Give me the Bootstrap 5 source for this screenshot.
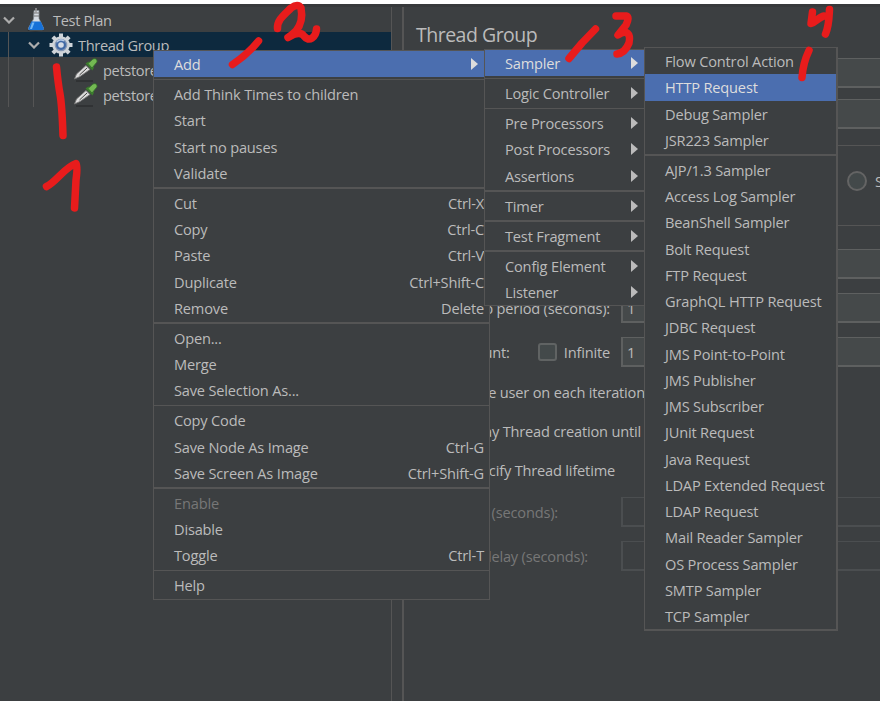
<!DOCTYPE html>
<html lang="en">
<head>
<meta charset="utf-8">
<meta name="viewport" content="width=device-width, initial-scale=1">
<title>Test Plan</title>
<link href="https://cdn.jsdelivr.net/npm/bootstrap@5.3.0/dist/css/bootstrap.min.css" rel="stylesheet">
<style>
body{width:880px;height:701px;background:#3c3f41;color:#bbb;font-family:"Open Sans","Noto Sans",sans-serif;font-size:14.6px;line-height:26.25px;letter-spacing:-.18px;white-space:nowrap}
.app{height:701px;border-top:4px solid #fff;overflow:hidden}
.edge{height:3px;background:#37393b}
.tree-pane{width:392px;border-right:1px solid #555;letter-spacing:-.35px}
.splitter{width:12px;border-right:2px solid #555}
.tree-row{height:25px;line-height:26px}
.tree-row.picked{background:#0d293e}
.guide{width:1px;background:#555;height:25px;margin-left:8px}
.guide + .guide{margin-left:24px}
.chev-top{width:12px;height:8px;margin-left:3px;margin-right:11px}
.chev-sub{width:12px;height:8px;margin-left:19px;margin-right:9px}
.plan-name{padding-left:7px}
.group-name{padding-left:5px}
.sample-icon{margin-left:40px;margin-right:5px}
.form-pane{width:476px;padding-left:12px;overflow:hidden}
.pane-title{font-size:19.5px;line-height:30px;height:51px;padding-top:13px;letter-spacing:-.5px}
.field-box{height:30px;line-height:28px;background:#45494a;border:2px solid #5e6060;border-top-width:1px;border-right:0;padding-left:4px}
.field-box.second{margin-top:11px}
.field-box.off{background:transparent;border-color:#4b4e50}
.field-row{height:30px;line-height:30px;margin-bottom:14px}
.field-row.last-on{margin-bottom:6px}
.field-name{width:206px;margin-right:-1px;flex:none}
.off-text{color:#777}
.opt-row{height:39px;line-height:39px}
.opt-a{width:229px}.opt-b{width:225px}.opt-c{width:199px}
.opt-gap{height:7px}
.off-a{width:142px}.off-b{width:172px}
.box-check{width:19px;height:18px;border:2px solid #606363;background:#43494a;border-radius:3px;margin-left:28px;margin-right:7px}
.box-radio{width:20px;height:20px;border:2px solid #646464;background:#43494a;border-radius:50%}
.group-one{margin-top:16px;height:80px;border-top:1px solid #555;padding-left:431px;padding-bottom:9px}
.group-two{border-top:1px solid #555;padding-top:23px}
.popup{position:absolute;background:#3c3f41;border:1px solid #555;overflow:hidden}
.popup-main{left:153px;top:50px;width:337px;height:550px}
.popup-add{left:484px;top:49px;width:162px;height:257px}
.popup-sampler{left:644px;top:47px;width:194px;height:584px;border-right-width:2px;border-bottom-width:2px}
.popup-item{height:26.25px;padding:0 5px 0 20px}
.popup-add .popup-item{padding-right:7px}
.popup-item.hot{background:#4b6eaf;color:#ddd}
.popup-rule{height:3.75px;padding-top:1.5px}
.popup-rule::before{content:"";display:block;height:1.25px;background:#555}
.popup-rule.thick{padding-top:.75px}
.popup-rule.thick::before{height:2px}
.arrow{width:7px;height:12px;border-left:7px solid #bbb;border-top:6px solid transparent;border-bottom:6px solid transparent}
.hot .arrow{border-left-color:#ddd}
.popup-main .arrow{margin-right:6px}
.ink{position:absolute;left:0;top:0;pointer-events:none}
</style>
<script src="https://cdn.jsdelivr.net/npm/bootstrap@5.3.0/dist/js/bootstrap.bundle.min.js"></script>
</head>
<body class="overflow-hidden position-relative">
<svg class="d-none">
  <symbol id="chev" viewBox="0 0 12 8"><path d="M1 1.500 6 6.500l5-5" fill="none" stroke="#adadad" stroke-width="2.200"/></symbol>
  <symbol id="dropper" viewBox="0 0 24 24">
    <path d="M2 23h17" stroke="#2c2f31" stroke-width="1.500"/>
    <path d="M.5 21 2.500 16 12 7.500l4 4L6 18.500z" fill="#dcdcdc" stroke="#777" stroke-width=".9"/>
    <path d="M5.500 17 13 10" stroke="#444" stroke-width="1"/>
    <path d="M11.500 5.500l7 7 1.500-3L14.500 3.500z" fill="#3b7d2c"/>
    <path d="M14 5.500 19 1q4.500-1.500 4 3L18 10z" fill="#74b953" stroke="#34702b" stroke-width=".8"/>
  </symbol>
</svg>
<div class="app">
  <div class="edge"></div>
  <div class="d-flex h-100">
    <nav class="tree-pane flex-shrink-0">
      <div class="tree-row d-flex align-items-center">
        <svg class="flex-shrink-0 chev-top"><use href="#chev"/></svg>
        <svg class="flex-shrink-0" width="20" height="24" viewBox="0 0 20 24">
          <ellipse cx="9.500" cy="22" rx="8" ry="1.500" fill="#292b2c"/>
          <path d="M8 2.500h5v8l4.500 9.500q.5 2-1.500 2H4q-2 0-1.500-2L7.500 11z" fill="#d4dbe2" stroke="#83898f" stroke-width=".7"/>
          <path d="M5.300 13.500h9.500l3 7q.2 1.500-1.500 1.500H4q-2 0-1.500-1.500z" fill="#1671d8"/>
          <path d="M6 14.500h2.500L6 21H4z" fill="#70b6f5"/><path d="M7.500 5h6M8 8h5" stroke="#777" stroke-width="1"/><path d="M10 0v5" stroke="#999" stroke-width="1.500"/>
        </svg>
        <span class="plan-name">Test Plan</span>
      </div>
      <div class="tree-row picked d-flex align-items-center">
        <span class="guide"></span>
        <svg class="flex-shrink-0 chev-sub"><use href="#chev"/></svg>
        <svg class="flex-shrink-0" width="24" height="24" viewBox="-12 -12 24 24">
          <g fill="#cfd4d9"><path id="tooth" d="M-2-11.500h4v23h-4z"/><use href="#tooth" transform="rotate(45)"/><use href="#tooth" transform="rotate(90)"/><use href="#tooth" transform="rotate(135)"/><circle r="8.800"/></g>
          <circle r="6.300" fill="#8397b5"/><circle r="5" fill="#4169a5"/><circle r="2.800" fill="#d4dbe5"/><path d="M-4-3A5 5 0 0 1 3-4" fill="none" stroke="#b5c9e5" stroke-width="1.500"/>
        </svg>
        <span class="group-name">Thread Group</span>
      </div>
      <div class="tree-row d-flex align-items-center"><span class="guide"></span><span class="guide"></span><svg class="sample-icon flex-shrink-0" width="24" height="24"><use href="#dropper"/></svg><span>petstore</span></div>
      <div class="tree-row d-flex align-items-center"><span class="guide"></span><span class="guide"></span><svg class="sample-icon flex-shrink-0" width="24" height="24"><use href="#dropper"/></svg><span>petstore</span></div>
    </nav>
    <div class="splitter flex-shrink-0"></div>
    <main class="form-pane flex-shrink-0">
      <h1 class="pane-title fw-normal mb-0">Thread Group</h1>
      <div class="field-box"></div>
      <div class="field-box second"></div>
      <div class="group-one d-flex align-items-center"><span class="box-radio flex-shrink-0"></span><span class="ms-1 ps-1">S</span></div>
      <section class="group-two">
        <div class="field-row d-flex"><div class="field-name"></div><div class="field-box flex-grow-1"></div></div>
        <div class="field-row d-flex"><div class="field-name text-end pe-2"><span class="me-1">Ramp-up period (seconds):</span></div><div class="field-box flex-grow-1">1</div></div>
        <div class="field-row last-on d-flex"><div class="field-name d-flex align-items-center justify-content-end pe-2"><span>Loop Count:</span><span class="box-check flex-shrink-0"></span><span class="me-1">Infinite</span></div><div class="field-box flex-grow-1">1</div></div>
        <div class="opt-row"><div class="opt-a text-end">Same user on each iteration</div></div>
        <div class="opt-row"><div class="opt-b text-end">Delay Thread creation until</div></div>
        <div class="opt-row"><div class="opt-c text-end">Specify Thread lifetime</div></div>
        <div class="opt-gap"></div>
        <div class="field-row d-flex off-text"><div class="field-name"><div class="off-a text-end">Duration (seconds):</div></div><div class="field-box off flex-grow-1"></div></div>
        <div class="field-row d-flex off-text"><div class="field-name"><div class="off-b text-end">Startup delay (seconds):</div></div><div class="field-box off flex-grow-1"></div></div>
      </section>
    </main>
  </div>
</div>

<div class="popup popup-main">
  <div class="popup-item hot d-flex justify-content-between align-items-center"><span>Add</span><i class="arrow"></i></div>
  <div class="popup-rule"></div>
  <div class="popup-item">Add Think Times to children</div>
  <div class="popup-item">Start</div>
  <div class="popup-item">Start no pauses</div>
  <div class="popup-item">Validate</div>
  <div class="popup-rule thick"></div>
  <div class="popup-item d-flex justify-content-between"><span>Cut</span><span>Ctrl-X</span></div>
  <div class="popup-item d-flex justify-content-between"><span>Copy</span><span>Ctrl-C</span></div>
  <div class="popup-item d-flex justify-content-between"><span>Paste</span><span>Ctrl-V</span></div>
  <div class="popup-item d-flex justify-content-between"><span>Duplicate</span><span>Ctrl+Shift-C</span></div>
  <div class="popup-item d-flex justify-content-between"><span>Remove</span><span>Delete</span></div>
  <div class="popup-rule thick"></div>
  <div class="popup-item">Open...</div>
  <div class="popup-item">Merge</div>
  <div class="popup-item">Save Selection As...</div>
  <div class="popup-rule"></div>
  <div class="popup-item">Copy Code</div>
  <div class="popup-item d-flex justify-content-between"><span>Save Node As Image</span><span>Ctrl-G</span></div>
  <div class="popup-item d-flex justify-content-between"><span>Save Screen As Image</span><span>Ctrl+Shift-G</span></div>
  <div class="popup-rule thick"></div>
  <div class="popup-item off-text">Enable</div>
  <div class="popup-item">Disable</div>
  <div class="popup-item d-flex justify-content-between"><span>Toggle</span><span>Ctrl-T</span></div>
  <div class="popup-rule"></div>
  <div class="popup-item">Help</div>
</div>

<div class="popup popup-add">
  <div class="popup-item hot d-flex justify-content-between align-items-center"><span>Sampler</span><i class="arrow"></i></div>
  <div class="popup-rule"></div>
  <div class="popup-item d-flex justify-content-between align-items-center"><span>Logic Controller</span><i class="arrow"></i></div>
  <div class="popup-rule"></div>
  <div class="popup-item d-flex justify-content-between align-items-center"><span>Pre Processors</span><i class="arrow"></i></div>
  <div class="popup-item d-flex justify-content-between align-items-center"><span>Post Processors</span><i class="arrow"></i></div>
  <div class="popup-item d-flex justify-content-between align-items-center"><span>Assertions</span><i class="arrow"></i></div>
  <div class="popup-rule"></div>
  <div class="popup-item d-flex justify-content-between align-items-center"><span>Timer</span><i class="arrow"></i></div>
  <div class="popup-rule"></div>
  <div class="popup-item d-flex justify-content-between align-items-center"><span>Test Fragment</span><i class="arrow"></i></div>
  <div class="popup-rule"></div>
  <div class="popup-item d-flex justify-content-between align-items-center"><span>Config Element</span><i class="arrow"></i></div>
  <div class="popup-item d-flex justify-content-between align-items-center"><span>Listener</span><i class="arrow"></i></div>
</div>

<div class="popup popup-sampler">
  <div class="popup-item">Flow Control Action</div>
  <div class="popup-item hot">HTTP Request</div>
  <div class="popup-item">Debug Sampler</div>
  <div class="popup-item">JSR223 Sampler</div>
  <div class="popup-rule thick"></div>
  <div class="popup-item">AJP/1.3 Sampler</div>
  <div class="popup-item">Access Log Sampler</div>
  <div class="popup-item">BeanShell Sampler</div>
  <div class="popup-item">Bolt Request</div>
  <div class="popup-item">FTP Request</div>
  <div class="popup-item">GraphQL HTTP Request</div>
  <div class="popup-item">JDBC Request</div>
  <div class="popup-item">JMS Point-to-Point</div>
  <div class="popup-item">JMS Publisher</div>
  <div class="popup-item">JMS Subscriber</div>
  <div class="popup-item">JUnit Request</div>
  <div class="popup-item">Java Request</div>
  <div class="popup-item">LDAP Extended Request</div>
  <div class="popup-item">LDAP Request</div>
  <div class="popup-item">Mail Reader Sampler</div>
  <div class="popup-item">OS Process Sampler</div>
  <div class="popup-item">SMTP Sampler</div>
  <div class="popup-item">TCP Sampler</div>
</div>

<svg class="ink" width="880" height="701" fill="none" stroke="#e81c1c" stroke-width="7.500" stroke-linecap="round" stroke-linejoin="round">
  <path d="M56.500 67Q58 83 60 94T63 135.500"/>
  <path d="M46.500 186.500C56 182 65 167 76 163.500Q78 165 76 180L74.500 208"/>
  <path d="M232.500 64.500Q248 54 258.500 41"/>
  <path d="M277.500 28.500C277 20 284 15 291 8Q298 3 301 8C303 18 300 26 296 31Q292 35 288 37.500C294 34 300 31 304 36C309 43 316 37 316.500 29"/>
  <path d="M569 58.500 582 43 595.500 29"/>
  <path d="M616 16H626Q630 17 626 25L618 35C627 29 631 34 629 43Q625 53 617 54"/>
  <path d="M812.500 12 811 23.500C816 22 819 17 824 16M829.500 9.500C829 18 829 26 825.500 34"/>
  <path d="M809 50.500Q803 63 802 77.500"/>
</svg>
</body>
</html>
